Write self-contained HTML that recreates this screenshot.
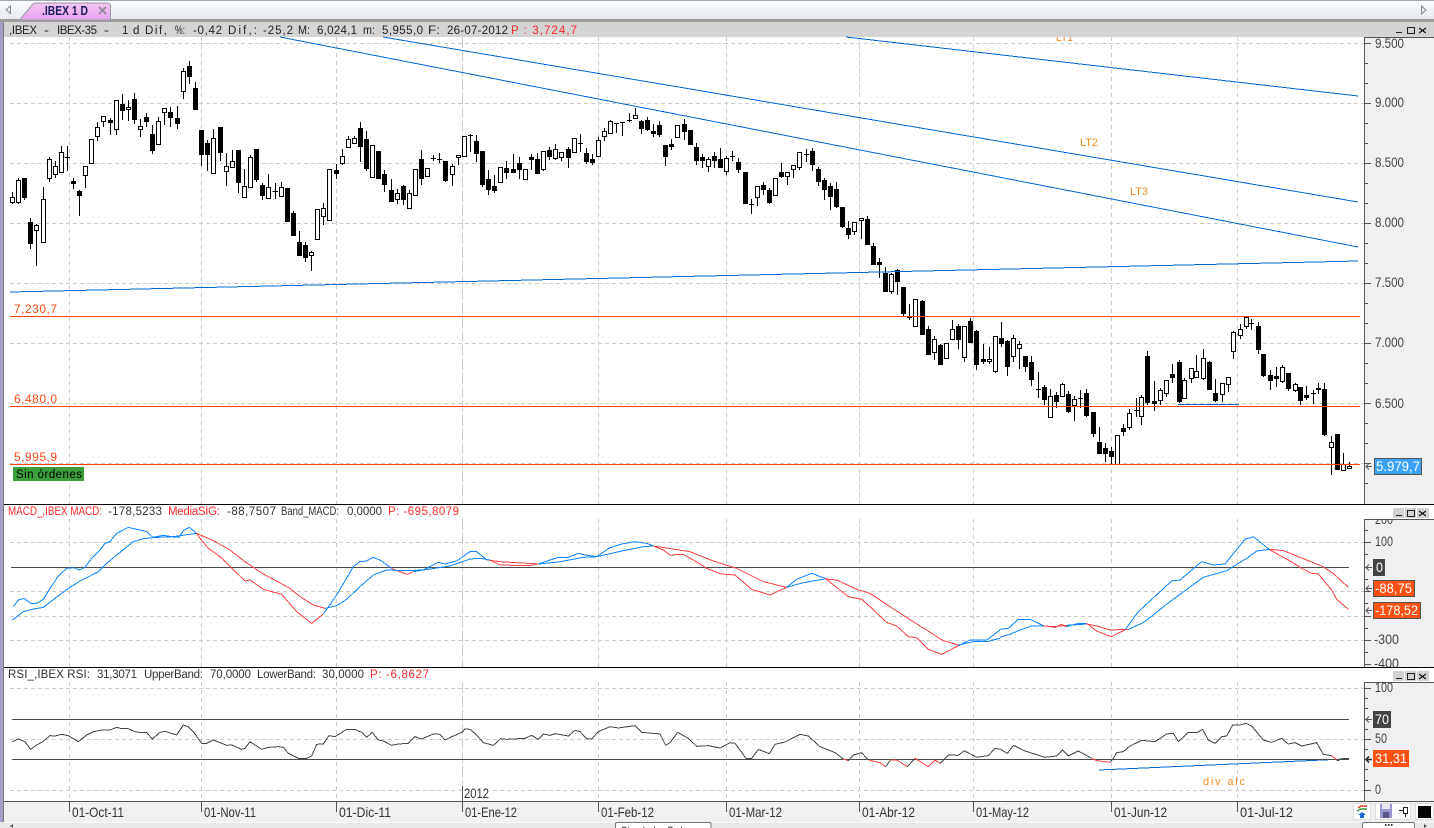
<!DOCTYPE html>
<html><head><meta charset="utf-8"><title>IBEX 1 D</title>
<style>
html,body{margin:0;padding:0;background:#fff}
body{width:1434px;height:828px;overflow:hidden}
svg{display:block;font-family:"Liberation Sans",sans-serif}
text{white-space:pre}
.g{stroke:#ccc;stroke-width:1;stroke-dasharray:4 3;fill:none}
.v{stroke:#ccc;stroke-width:1;stroke-dasharray:4 4;fill:none}
.c{shape-rendering:crispEdges}
.t{font-size:11.5px;fill:#333}
.k{font-size:11.5px;fill:#222}
.r{font-size:11.5px;fill:#ff2828}
.a{font-size:14px;fill:#444}
.d{font-size:14px;fill:#333}
.w{font-size:14px;fill:#fff}
.o{font-size:11px;fill:#f08a1c}
.l{font-size:12px;fill:#ff4a12}
</style></head>
<body>
<svg width="1434" height="828" viewBox="0 0 1434 828" xmlns="http://www.w3.org/2000/svg">
<defs>
<linearGradient id="top" x1="0" y1="0" x2="0" y2="1"><stop offset="0" stop-color="#fbfcfd"/><stop offset="1" stop-color="#e6eaee"/></linearGradient>
<linearGradient id="tab" x1="0" y1="0" x2="0" y2="1"><stop offset="0" stop-color="#f4c8f2"/><stop offset="1" stop-color="#e6a4f0"/></linearGradient>
</defs>
<rect width="1434" height="828" fill="#fff"/>
<!-- top tab bar -->
<rect x="0" y="0" width="1434" height="19" fill="url(#top)"/>
<rect x="0" y="0" width="1434" height="1" fill="#a0aab4"/>
<rect x="0" y="19" width="1434" height="3" fill="#9c9c9c"/>
<path d="M20 19.5L33 4Q34 3 36 3H107Q110 3 110.500 6V19.500" fill="url(#tab)" stroke="#9a9aa8"/>
<text x="42" y="15" font-size="13" font-weight="bold" fill="#1a1a60" textLength="46" lengthAdjust="spacingAndGlyphs">.IBEX 1 D</text>
<path d="M99 7L106 14M106 7L99 14" stroke="#8a8a92" stroke-width="1.600"/>
<path d="M10.500 6V13.500L6 9.700Z" fill="#eee" stroke="#888"/>
<path d="M1421.500 6V14L1426 10Z" fill="#eee" stroke="#888"/>
<!-- frame -->
<rect x="0" y="22" width="3" height="806" fill="#a89cc8"/>
<rect x="3" y="22" width="1" height="800" fill="#777"/>
<rect x="4" y="22" width="1430" height="15" fill="#d4d4d4"/>
<!-- right axis background -->
<rect x="1364" y="37" width="70" height="467" fill="#f0f0f0"/>
<rect x="1364" y="519" width="70" height="148" fill="#f0f0f0"/>
<rect x="1364" y="682" width="70" height="119" fill="#f0f0f0"/>
<rect x="4" y="801" width="1430" height="21" fill="#f0f0f0"/>
<rect x="0" y="822" width="1434" height="6" fill="#e8e8e8"/>
<rect x="3" y="822" width="1431" height="1" fill="#f8f8f8"/>

<!-- grid main -->
<g class="c">
<path class="g" d="M10 43.500H1364M10 103.500H1364M10 163.500H1364M10 223.500H1364M10 283.500H1364M10 343.500H1364M10 403.500H1364M10 463.500H1364"/>
<path class="v" d="M69.500 37V504M201.500 37V504M336.500 37V504M598.500 37V504M726.500 37V504M859.500 37V504M973.500 37V504M1111.500 37V504M1237.500 37V504"/>
<path d="M462.500 37V504" stroke="#ccc" stroke-dasharray="11 3"/>
<!-- grid macd -->
<path class="g" d="M10 542.500H1364M10 591.500H1364M10 616.500H1364M10 640.500H1364"/>
<path class="v" d="M69.500 519V667M201.500 519V667M336.500 519V667M598.500 519V667M726.500 519V667M859.500 519V667M973.500 519V667M1111.500 519V667M1237.500 519V667"/>
<path d="M462.500 519V667" stroke="#ccc" stroke-dasharray="11 3"/>
<!-- grid rsi -->
<path class="g" d="M10 688.500H1364M10 739.500H1364M10 790.500H1364"/>
<path class="v" d="M69.500 682V801M201.500 682V801M336.500 682V801M598.500 682V801M726.500 682V801M859.500 682V801M973.500 682V801M1111.500 682V801M1237.500 682V801"/>
<path d="M462.500 682V786" stroke="#ccc" stroke-dasharray="11 3"/>
</g>

<!-- candle wicks -->
<g class="c">
<path fill="none" stroke="#000" d="M12.500 192V204M18.500 178V204M24.500 178V200M30.500 218V249M36.500 224V266M43.500 187V242M49.500 157V182M55.500 161V178M61.500 146V172M67.500 146V171M64.500 157.500H70M73.500 178V189M79.500 190V216M85.500 166V188M91.500 139V163M97.500 122V141M103.500 116V127M110.500 118V135M116.500 100V135M122.500 94V120M128.500 100V121M134.500 93V124M140.500 119V137M146.500 113V127M152.500 125V154M158.500 117V144M164.500 112V125M170.500 107V127M177.500 106V129M183.500 68V99M189.500 61V84M195.500 82V109M201.500 130V166M207.500 140V171M213.500 129V174M220.500 127V161M226.500 153V186M232.500 150V167M238.500 150V193M244.500 169V198M250.500 155V188M256.500 149V182M262.500 183V200M268.500 174V198M275.500 183V199M272.500 191.500H278M281.500 182V197M287.500 188V221M293.500 211V236M299.500 231V255M305.500 242V262M311.500 251V271M317.500 209V239M323.500 203V225M329.500 169V221M336.500 164V179M342.500 149V165M348.500 136V147M354.500 136V143M360.500 122V162M366.500 131V171M372.500 145V177M378.500 151V178M384.500 170V192M391.500 179V201M397.500 189V204M403.500 185V205M409.500 190V208M415.500 169V195M421.500 150V185M427.500 168V176M433.500 155V161M431 158.500H436M439.500 153V163M437 159.500H442M445.500 161V182M452.500 164V186M458.500 155V165M464.500 136V156M470.500 134V152M468 135.500H473M476.500 135V162M482.500 151V187M488.500 170V195M494.500 175V193M500.500 167V182M506.500 161V179M513.500 154V173M519.500 157V179M525.500 169V180M531.500 154V170M537.500 153V174M543.500 151V171M549.500 147V160M555.500 144V160M561.500 152V161M568.500 147V168M574.500 138V152M580.500 134V152M578 143.500H583M586.500 148V164M592.500 154V165M598.500 137V156M604.500 128V141M610.500 120V134M616.500 123V133M614 123.500H619M622.500 122V136M620 122.500H625M629.500 113V122M627 120.500H632M635.500 108V119M641.500 120V134M647.500 117V131M653.500 124V137M659.500 121V137M665.500 145V166M671.500 139V150M677.500 125V137M684.500 119V140M690.500 130V145M696.500 143V165M702.500 154V168M708.500 157V172M714.500 152V168M720.500 148V168M726.500 156V175M732.500 151V161M730 156.500H735M738.500 158V173M745.500 172V203M751.500 199V214M749 204.500H754M757.500 186V206M763.500 182V195M769.500 188V204M775.500 178V196M781.500 163V178M787.500 172V185M793.500 165V178M799.500 152V170M806.500 149V162M804 154.500H809M812.500 148V171M818.500 167V186M824.500 178V200M830.500 183V210M836.500 182V208M842.500 207V228M848.500 221V239M854.500 222V235M861.500 218V239M867.500 216V244M873.500 243V265M879.500 258V278M885.500 267V291M891.500 273V294M897.500 269V295M903.500 287V316M909.500 304V320M907 317.500H912M915.500 299V327M922.500 300V334M928.500 326V354M934.500 336V360M940.500 344V364M946.500 343V358M952.500 320V339M958.500 324V349M964.500 326V362M970.500 318V343M976.500 330V370M983.500 344V364M989.500 347V364M995.500 336V373M1001.500 322V347M1007.500 340V376M1013.500 335V362M1019.500 341V369M1025.500 356V372M1031.500 356V386M1038.500 372V398M1036 389.500H1041M1044.500 385V405M1050.500 389V417M1056.500 392V408M1062.500 383V396M1068.500 391V413M1074.500 396V421M1080.500 390V408M1078 398.500H1083M1086.500 389V417M1093.500 412V437M1099.500 427V454M1105.500 443V462M1111.500 447V464M1117.500 435V464M1123.500 424V436M1129.500 409V430M1136.500 398V417M1134 410.500H1139M1141.500 395V425M1147.500 351V405M1154.500 381V411M1160.500 388V405M1166.500 380V397M1172.500 364V383M1179.500 360V403M1184.500 378V398M1191.500 368V383M1196.500 355V377M1203.500 349V380M1209.500 361V390M1215.500 379V402M1222.500 383V402M1228.500 377V392M1233.500 331V359M1240.500 324V339M1246.500 316V329M1251.500 319V330M1249 323.500H1254M1258.500 322V354M1263.500 354V377M1270.500 370V390M1276.500 367V387M1282.500 365V383M1288.500 373V391M1295.500 383V392M1300.500 387V405M1306.500 386V400M1313.500 390V404M1311 393.500H1316M1318.500 383V394M1324.500 383V436M1331.500 436V475M1337.500 434V470M1343.500 453V470M1349.500 462V469"/>
</g>

<!-- black bodies -->
<g class="c">
<path fill="#000" stroke="#000" d="M22.500 178.500h4v19h-4zM28.500 222.500h4v21h-4zM71.500 181.500h4v2h-4zM77.500 191.500h4v4h-4zM108.500 120.500h4v2h-4zM120.500 104.500h4v6h-4zM132.500 99.500h4v20h-4zM144.500 117.500h4v4h-4zM150.500 134.500h4v16h-4zM168.500 112.500h4v5h-4zM175.500 118.500h4v5h-4zM187.500 66.500h4v10h-4zM193.500 88.500h4v21h-4zM199.500 130.500h4v24h-4zM205.500 143.500h4v11h-4zM218.500 127.500h4v25h-4zM236.500 150.500h4v32h-4zM254.500 149.500h4v30h-4zM260.500 185.500h4v10h-4zM285.500 188.500h4v33h-4zM291.500 213.500h4v22h-4zM297.500 242.500h4v13h-4zM303.500 245.500h4v12h-4zM334.500 170.500h4v3h-4zM358.500 128.500h4v18h-4zM364.500 139.500h4v29h-4zM376.500 151.500h4v27h-4zM382.500 174.500h4v10h-4zM389.500 190.500h4v11h-4zM401.500 186.500h4v13h-4zM419.500 159.500h4v19h-4zM443.500 161.500h4v19h-4zM474.500 141.500h4v12h-4zM480.500 151.500h4v33h-4zM486.500 179.500h4v10h-4zM492.500 186.500h4v4h-4zM504.500 168.500h4v4h-4zM511.500 169.500h4v3h-4zM517.500 163.500h4v6h-4zM529.500 157.500h4v2h-4zM535.500 159.500h4v14h-4zM547.500 150.500h4v6h-4zM566.500 149.500h4v8h-4zM584.500 153.500h4v8h-4zM590.500 159.500h4v3h-4zM639.500 121.500h4v7h-4zM645.500 120.500h4v9h-4zM651.500 131.500h4v2h-4zM657.500 125.500h4v9h-4zM663.500 145.500h4v11h-4zM669.500 144.500h4v2h-4zM682.500 124.500h4v7h-4zM688.500 130.500h4v14h-4zM694.500 147.500h4v13h-4zM700.500 157.500h4v3h-4zM712.500 156.500h4v4h-4zM718.500 159.500h4v8h-4zM736.500 162.500h4v7h-4zM743.500 172.500h4v31h-4zM761.500 185.500h4v4h-4zM767.500 190.500h4v12h-4zM779.500 172.500h4v4h-4zM810.500 151.500h4v13h-4zM816.500 169.500h4v12h-4zM822.500 180.500h4v9h-4zM828.500 186.500h4v10h-4zM834.500 189.500h4v17h-4zM840.500 207.500h4v19h-4zM846.500 228.500h4v6h-4zM865.500 219.500h4v25h-4zM871.500 246.500h4v18h-4zM877.500 262.500h4v2h-4zM883.500 273.500h4v18h-4zM895.500 270.500h4v11h-4zM901.500 287.500h4v26h-4zM920.500 301.500h4v33h-4zM926.500 329.500h4v25h-4zM938.500 345.500h4v19h-4zM956.500 326.500h4v13h-4zM968.500 321.500h4v21h-4zM974.500 331.500h4v33h-4zM981.500 359.500h4v2h-4zM999.500 338.500h4v5h-4zM1005.500 341.500h4v25h-4zM1023.500 356.500h4v10h-4zM1029.500 362.500h4v17h-4zM1042.500 387.500h4v12h-4zM1054.500 395.500h4v6h-4zM1066.500 394.500h4v17h-4zM1084.500 393.500h4v22h-4zM1091.500 412.500h4v21h-4zM1097.500 442.500h4v11h-4zM1103.500 448.500h4v5h-4zM1109.500 451.500h4v5h-4zM1121.500 428.500h4v3h-4zM1145.500 356.500h4v46h-4zM1152.500 401.500h4v2h-4zM1170.500 374.500h4v3h-4zM1177.500 362.500h4v39h-4zM1207.500 362.500h4v27h-4zM1213.500 393.500h4v7h-4zM1256.500 326.500h4v23h-4zM1261.500 354.500h4v21h-4zM1268.500 375.500h4v5h-4zM1274.500 376.500h4v2h-4zM1286.500 373.500h4v15h-4zM1298.500 387.500h4v13h-4zM1304.500 395.500h4v2h-4zM1316.500 388.500h4v1h-4zM1322.500 389.500h4v45h-4zM1335.500 434.500h4v35h-4z"/>
<!-- white bodies -->
<path fill="#fff" stroke="#000" d="M10.500 197.500h4v5h-4zM16.500 180.500h4v22h-4zM34.500 225.500h4v5h-4zM41.500 199.500h4v43h-4zM47.500 159.500h4v19h-4zM53.500 166.500h4v8h-4zM59.500 152.500h4v20h-4zM83.500 166.500h4v9h-4zM89.500 139.500h4v24h-4zM95.500 127.500h4v9h-4zM101.500 116.500h4v5h-4zM114.500 100.500h4v29h-4zM126.500 107.500h4v2h-4zM138.500 126.500h4v3h-4zM156.500 121.500h4v23h-4zM162.500 108.500h4v4h-4zM181.500 71.500h4v20h-4zM211.500 138.500h4v35h-4zM224.500 166.500h4v5h-4zM230.500 161.500h4v6h-4zM242.500 186.500h4v11h-4zM248.500 157.500h4v30h-4zM266.500 187.500h4v11h-4zM279.500 187.500h4v9h-4zM309.500 252.500h4v3h-4zM315.500 209.500h4v30h-4zM321.500 208.500h4v8h-4zM327.500 169.500h4v51h-4zM340.500 156.500h4v7h-4zM346.500 139.500h4v8h-4zM352.500 138.500h4v5h-4zM370.500 145.500h4v32h-4zM395.500 193.500h4v6h-4zM407.500 193.500h4v15h-4zM413.500 169.500h4v26h-4zM425.500 168.500h4v8h-4zM450.500 166.500h4v8h-4zM456.500 155.500h4v2h-4zM462.500 136.500h4v20h-4zM498.500 167.500h4v15h-4zM523.500 169.500h4v10h-4zM541.500 151.500h4v18h-4zM553.500 149.500h4v9h-4zM559.500 152.500h4v5h-4zM572.500 138.500h4v14h-4zM596.500 140.500h4v16h-4zM602.500 131.500h4v5h-4zM608.500 121.500h4v12h-4zM633.500 115.500h4v3h-4zM675.500 125.500h4v12h-4zM706.500 159.500h4v7h-4zM724.500 158.500h4v13h-4zM755.500 186.500h4v11h-4zM773.500 178.500h4v17h-4zM785.500 172.500h4v4h-4zM791.500 165.500h4v4h-4zM797.500 152.500h4v15h-4zM852.500 222.500h4v9h-4zM859.500 218.500h4v2h-4zM889.500 274.500h4v17h-4zM913.500 299.500h4v27h-4zM932.500 339.500h4v13h-4zM944.500 343.500h4v15h-4zM950.500 329.500h4v10h-4zM962.500 326.500h4v31h-4zM987.500 359.500h4v2h-4zM993.500 336.500h4v35h-4zM1011.500 338.500h4v18h-4zM1017.500 344.500h4v4h-4zM1048.500 396.500h4v21h-4zM1060.500 384.500h4v12h-4zM1072.500 399.500h4v6h-4zM1115.500 435.500h4v29h-4zM1127.500 413.500h4v14h-4zM1139.500 397.500h4v19h-4zM1158.500 390.500h4v10h-4zM1164.500 380.500h4v13h-4zM1182.500 380.500h4v18h-4zM1189.500 368.500h4v10h-4zM1194.500 371.500h4v6h-4zM1201.500 358.500h4v20h-4zM1220.500 383.500h4v11h-4zM1226.500 377.500h4v7h-4zM1231.500 332.500h4v19h-4zM1238.500 329.500h4v6h-4zM1244.500 317.500h4v9h-4zM1280.500 367.500h4v14h-4zM1293.500 384.500h4v6h-4zM1329.500 442.500h4v5h-4zM1341.500 464.500h4v6h-4zM1347.500 466.500h4v2h-4z"/>
</g>

<!-- trend lines -->
<g class="c" fill="none" stroke="#0068d0">
<path d="M280 37L1358 247M383 37L1358 202M846 37L1358 96M10 292L1358 261M1178 404.500H1239"/>
<path d="M1099 770L1345 759"/>
</g>
<g class="c" fill="none" stroke="#ff4208">
<path d="M10 316.500H1360M10 406.500H1360M10 464.500H1360"/>
</g>
<g class="c" fill="none" stroke="#4a4a4a">
<path d="M11 567.500H1349M12 719.500H1349M12 759.500H1349"/>
</g>

<!-- macd lines -->
<g fill="none" stroke-width="3" stroke-linejoin="round" class="c">
<g transform="translate(0 500) scale(.33333)">
<path stroke="#0a84ff" d="M40 320L55 300 72 295 92 310 110 310 130 298 150 265 175 228 200 205 220 203 238 210 255 202 275 175 300 150 315 130 330 125 350 100 385 82 410 88 440 95 458 112 490 106 515 110 537 112 550 92 568 82 590 100"/>
<path stroke="#ff4040" d="M590 100L600 115 625 145 660 170 690 200 735 243 750 240 790 268 845 283 890 335 935 370 970 342"/>
<path stroke="#0a84ff" d="M970 342L1010 285 1060 200 1080 185 1100 183 1118 172 1140 180 1175 205"/>
<path stroke="#ff4040" d="M1175 205L1190 212 1222 223 1240 215"/>
<path stroke="#0a84ff" d="M1240 215L1270 210 1315 187 1335 192 1370 183 1410 155 1430 155 1440 163 1461 180"/>
<path stroke="#ff4040" d="M1461 180L1500 185"/>
<path stroke="#0a84ff" d="M37 360L70 335 100 327 130 322 165 295 205 265 240 243 270 228 295 215 320 190 350 165 400 125 430 116 470 112 520 110 590 100"/>
<path stroke="#ff4040" d="M590 100L640 122 690 150 735 185 790 222 870 265 900 290 940 315 975 325"/>
<path stroke="#0a84ff" d="M975 325L1010 317 1040 298 1080 260 1120 225 1160 210 1220 212 1270 210 1350 198 1410 177 1440 175 1470 180"/>
<path stroke="#ff4040" d="M1470 180L1500 195"/>
</g>
<g transform="translate(500 500) scale(.33333)">
<path stroke="#ff4040" d="M0 185L50 188 115 192M0 195L85 197 115 192"/>
<path stroke="#0a84ff" d="M115 192L150 180 175 172 205 172 235 160 255 165 290 170 330 143 365 132 405 125 440 130 460 138M115 192L175 186 250 172 290 170 370 152 430 140 460 138"/>
<path stroke="#ff4040" d="M460 138L490 150 510 165 550 163 580 180 620 205 665 222 705 225 755 268 810 285 860 262M460 138L570 155 640 183 710 205 790 245 860 262"/>
<path stroke="#0a84ff" d="M860 262L890 238 935 220 975 235M860 262L910 248 975 237"/>
<path stroke="#ff4040" d="M975 235L1010 262 1045 290 1085 298 1110 320 1160 367 1190 378 1225 410 1250 413 1285 448 1325 463 1375 437M975 237L1010 240 1070 268 1110 280 1170 320 1260 378 1330 422 1375 435"/>
<path stroke="#0a84ff" d="M1375 437L1410 420 1460 420 1500 390M1375 435L1420 425 1460 425 1500 415"/>
</g>
<g transform="translate(1000 500) scale(.33333)">
<path stroke="#0a84ff" d="M0 388L25 385 55 358 90 358 130 377M0 412L30 403 60 390 95 378 130 378"/>
<path stroke="#ff4040" d="M130 377L165 382 185 373 200 380M130 378L165 380 200 376"/>
<path stroke="#0a84ff" d="M200 380L235 370 260 370M200 376L260 372"/>
<path stroke="#ff4040" d="M260 370L290 393 333 410 375 390M260 372L290 378 330 390 385 388"/>
<path stroke="#0a84ff" d="M375 390L415 335 515 243 540 240 605 185 640 195 675 192 735 118 760 110 810 150M385 388L430 368 510 305 610 232 680 212 740 175 770 153 810 148"/>
<path stroke="#ff4040" d="M810 150L870 183 905 205 935 220 955 222 995 270 1010 298 1045 328M810 148L850 152 900 172 965 198 1000 220 1045 262"/>
</g>
<!-- rsi -->
<g transform="translate(0 670) scale(.33333)">
<path stroke="#444" d="M37 215L55 207 75 215 92 238 110 225 128 215 150 197 165 198 185 193 205 197 235 215 260 195 280 185 305 180 330 180 350 172 365 176 385 176 405 185 425 188 440 187 457 207 480 187 495 184 530 195 550 165 565 170 580 185 605 220 620 220 640 210 660 218 680 226 695 225 725 238 735 235 750 215 785 238 805 232 835 230 850 232 865 250 895 265 920 265 935 258 950 223 970 222 987 197 1005 200 1040 178 1065 178 1085 187 1100 202 1117 187 1135 210 1150 213 1175 226 1195 222 1225 220 1245 200 1265 207 1300 192 1320 193 1335 210 1360 198 1385 187 1395 177 1410 178 1430 195 1450 218 1480 226 1500 208"/>
</g>
<g transform="translate(500 500) scale(.33333)">
<path stroke="#444" d="M0 716L20 718 75 715 95 706 115 718 130 702 150 706 165 701 205 708 225 691 240 695 260 716 275 717 295 695 330 680 355 684 405 677 425 697 480 702 497 736 510 728 533 697 565 715 590 739 625 737 660 744 690 728 705 730 738 775 755 775 775 748 808 761 825 733 855 726 900 703 925 708 960 740 1005 758 1030 777"/>
<path stroke="#ff4040" d="M1030 777L1045 782"/>
<path stroke="#444" d="M1045 782L1060 765 1085 758 1105 780"/>
<path stroke="#ff4040" d="M1105 780L1140 788 1157 800"/>
<path stroke="#444" d="M1157 800L1172 780"/>
<path stroke="#ff4040" d="M1172 780L1190 780 1222 800"/>
<path stroke="#444" d="M1222 800L1245 775"/>
<path stroke="#ff4040" d="M1245 775L1285 800 1305 780 1320 790"/>
<path stroke="#444" d="M1320 790L1345 765 1375 766 1393 752 1430 772 1465 767 1485 745 1500 748"/>
</g>
<g transform="translate(1000 670) scale(.33333)">
<path stroke="#444" d="M0 237L22 250 40 226 75 243 135 262 170 258 187 240 205 258 235 243 275 265"/>
<path stroke="#ff4040" d="M275 265L290 272 330 277"/>
<path stroke="#444" d="M330 277L340 265 350 248 370 245 390 228 425 211 465 215 500 192 520 190 535 215 565 187 590 188 608 178 625 210 645 220 665 200 680 198 698 165 720 165 738 160 755 168 790 210 815 217 845 205 865 222 885 218 905 228 950 218 970 253 995 257"/>
<path stroke="#ff4040" d="M995 257L1010 270"/>
<path stroke="#444" d="M1010 270L1015 272 1025 266 1047 266"/>
</g>
</g>

<!-- pane separators -->
<rect x="4" y="504" width="1430" height="1" fill="#000"/>
<rect x="4" y="505" width="1430" height="14" fill="#fff"/>
<rect x="4" y="667" width="1430" height="1" fill="#000"/>
<rect x="4" y="668" width="1430" height="14" fill="#fff"/>
<rect x="4" y="801" width="1430" height="1" fill="#555"/>

<!-- axes -->
<g class="c" fill="none" stroke="#555">
<path d="M1364.500 37V504M1364 37.500H1434M1364.500 519V667M1364 519.500H1434M1364.500 682V801M1364 682.500H1434"/>
<path d="M1364 43.500h7M1364 103.500h7M1364 163.500h7M1364 223.500h7M1364 283.500h7M1364 343.500h7M1364 403.500h7M1364 463.500h7M1364 63.500h4M1364 83.500h4M1364 123.500h4M1364 143.500h4M1364 183.500h4M1364 203.500h4M1364 243.500h4M1364 263.500h4M1364 303.500h4M1364 323.500h4M1364 363.500h4M1364 383.500h4M1364 423.500h4M1364 443.500h4M1364 483.500h4"/>
<path d="M1364 542.500h7M1364 567.500h7M1364 591.500h7M1364 616.500h7M1364 640.500h7M1364 664.500h7M1364 530.500h4M1364 554.500h4M1364 579.500h4M1364 603.500h4M1364 628.500h4M1364 652.500h4"/>
<path d="M1364 688.500h7M1364 719.500h7M1364 739.500h7M1364 759.500h7M1364 790.500h7M1364 698.500h4M1364 708.500h4M1364 729.500h4M1364 749.500h4M1364 769.500h4M1364 780.500h4"/>
<path d="M69.500 802v10M201.500 802v10M336.500 802v10M462.500 786v26M598.500 802v10M726.500 802v10M859.500 802v10M973.500 802v10M1111.500 802v10M1237.500 802v10"/>
</g>

<!-- title texts -->
<text class="k" x="9" y="34" textLength="28" lengthAdjust="spacing">,IBEX</text>
<text class="k" x="44" y="34" textLength="5" lengthAdjust="spacingAndGlyphs">-</text>
<text class="k" x="57" y="34" textLength="40" lengthAdjust="spacing">IBEX-35</text>
<text class="k" x="104" y="34" textLength="5" lengthAdjust="spacingAndGlyphs">-</text>
<text class="k" x="122" y="34">1</text>
<text class="k" x="133" y="34">d</text>
<text class="k" x="145" y="34" textLength="22" lengthAdjust="spacing">Dif,</text>
<text class="k" x="175" y="34" textLength="10" lengthAdjust="spacingAndGlyphs">%:</text>
<text class="k" x="193" y="34" textLength="29" lengthAdjust="spacing">-0,42</text>
<text class="k" x="228" y="34" textLength="29" lengthAdjust="spacing">Dif,:</text>
<text class="k" x="263" y="34" textLength="30" lengthAdjust="spacing">-25,2</text>
<text class="k" x="298" y="34" textLength="12" lengthAdjust="spacingAndGlyphs">M:</text>
<text class="k" x="317" y="34" textLength="40" lengthAdjust="spacing">6,024,1</text>
<text class="k" x="363" y="34" textLength="12" lengthAdjust="spacingAndGlyphs">m:</text>
<text class="k" x="382" y="34" textLength="41" lengthAdjust="spacing">5,955,0</text>
<text class="k" x="428" y="34" textLength="12" lengthAdjust="spacingAndGlyphs">F:</text>
<text class="k" x="447" y="34" textLength="61" lengthAdjust="spacing">26-07-2012</text>
<text class="r" x="511" y="34" textLength="66" lengthAdjust="spacing">P : 3,724,7</text>
<text class="r" x="8" y="515" textLength="94" lengthAdjust="spacingAndGlyphs">MACD_,IBEX MACD:</text>
<text class="t" x="108" y="515" textLength="54" lengthAdjust="spacing">-178,5233</text>
<text class="r" x="168" y="515" textLength="52" lengthAdjust="spacing">MediaSIG:</text>
<text class="t" x="227" y="515" textLength="49" lengthAdjust="spacing">-88,7507</text>
<text class="t" x="281" y="515" textLength="58" lengthAdjust="spacingAndGlyphs">Band_MACD:</text>
<text class="t" x="347" y="515" textLength="35" lengthAdjust="spacing">0,0000</text>
<text class="r" x="388" y="515" textLength="71" lengthAdjust="spacing">P: -695,8079</text>
<text class="t" x="8" y="678" textLength="82" lengthAdjust="spacing">RSI_,IBEX RSI:</text>
<text class="t" x="97" y="678" textLength="40" lengthAdjust="spacing">31,3071</text>
<text class="t" x="144" y="678" textLength="59" lengthAdjust="spacing">UpperBand:</text>
<text class="t" x="210" y="678" textLength="41" lengthAdjust="spacing">70,0000</text>
<text class="t" x="257" y="678" textLength="59" lengthAdjust="spacing">LowerBand:</text>
<text class="t" x="322" y="678" textLength="42" lengthAdjust="spacing">30,0000</text>
<text class="r" x="370" y="678" textLength="59" lengthAdjust="spacing">P: -6,8627</text>

<!-- pane annotation labels -->
<svg x="1000" y="37" width="200" height="10"><text class="o" x="56" y="4" textLength="17" lengthAdjust="spacingAndGlyphs">LT1</text></svg>
<text class="o" x="1080" y="146" textLength="18" lengthAdjust="spacingAndGlyphs">LT2</text>
<text class="o" x="1130" y="195" textLength="18" lengthAdjust="spacingAndGlyphs">LT3</text>
<text class="l" x="14" y="313" textLength="43" lengthAdjust="spacing">7,230,7</text>
<text class="l" x="14" y="403" textLength="43" lengthAdjust="spacing">6,480,0</text>
<text class="l" x="14" y="461" textLength="43" lengthAdjust="spacing">5,995,9</text>
<rect x="13" y="467" width="71" height="14" fill="#3a9e3a"/>
<text x="16" y="478" font-size="11.500" fill="#000" textLength="66" lengthAdjust="spacing">Sin órdenes</text>
<text x="1203" y="785" font-size="11" fill="#f08a1c" textLength="42" lengthAdjust="spacing">div alc</text>

<!-- right axis labels -->
<g>
<svg x="1365" y="37" width="69" height="16"><text class="a" x="10" y="11" textLength="29" lengthAdjust="spacingAndGlyphs">9.500</text></svg>
<text class="a" x="1375" y="107" textLength="29" lengthAdjust="spacingAndGlyphs">9.000</text>
<text class="a" x="1375" y="167" textLength="29" lengthAdjust="spacingAndGlyphs">8.500</text>
<text class="a" x="1375" y="227" textLength="29" lengthAdjust="spacingAndGlyphs">8.000</text>
<text class="a" x="1375" y="287" textLength="29" lengthAdjust="spacingAndGlyphs">7.500</text>
<text class="a" x="1375" y="347" textLength="29" lengthAdjust="spacingAndGlyphs">7.000</text>
<text class="a" x="1375" y="408" textLength="29" lengthAdjust="spacingAndGlyphs">6.500</text>
<svg x="1365" y="519" width="69" height="8"><text class="a" x="10" y="5" textLength="18" lengthAdjust="spacingAndGlyphs">200</text></svg>
<text class="a" x="1375" y="546" textLength="18" lengthAdjust="spacingAndGlyphs">100</text>
<text class="a" x="1374" y="644" textLength="25" lengthAdjust="spacingAndGlyphs">-300</text>
<svg x="1365" y="650" width="69" height="17"><text class="a" x="9" y="18" textLength="25" lengthAdjust="spacingAndGlyphs">-400</text></svg>
<text class="a" x="1375" y="692" textLength="18" lengthAdjust="spacingAndGlyphs">100</text>
<text class="a" x="1375" y="743" textLength="12" lengthAdjust="spacingAndGlyphs">50</text>
<text class="a" x="1375" y="794" textLength="6" lengthAdjust="spacingAndGlyphs">0</text>
</g>

<!-- value boxes -->
<g class="c">
<rect x="1374.500" y="458.500" width="47" height="16" fill="#3aa2f8" stroke="#555"/>
<rect x="1373" y="559" width="12" height="17" fill="#444"/>
<rect x="1373.500" y="580.500" width="41" height="16" fill="#ff5212" stroke="#555"/>
<rect x="1373.500" y="602.500" width="47" height="16" fill="#ff5212" stroke="#555"/>
<rect x="1373" y="711" width="18" height="17" fill="#444"/>
<rect x="1373" y="750" width="36" height="17" fill="#ff5212"/>
</g>
<text class="w" x="1376" y="471" textLength="44" lengthAdjust="spacingAndGlyphs">5.979,7</text>
<text class="w" x="1376" y="572" textLength="7" lengthAdjust="spacingAndGlyphs">0</text>
<text class="w" x="1375" y="593" textLength="37" lengthAdjust="spacingAndGlyphs">-88,75</text>
<text class="w" x="1375" y="615" textLength="43" lengthAdjust="spacingAndGlyphs">-178,52</text>
<text class="w" x="1375" y="724" textLength="14" lengthAdjust="spacingAndGlyphs">70</text>
<text class="w" x="1375" y="763" textLength="32" lengthAdjust="spacingAndGlyphs">31,31</text>
<g fill="none" stroke="#555">
<path d="M1372 466.500H1366M1369 463.500L1366 466.500 1369 469.500M1372 567.500H1366M1369 564.500L1366 567.500 1369 570.500M1372 588.500H1366M1369 585.500L1366 588.500 1369 591.500M1372 610.500H1366M1369 607.500L1366 610.500 1369 613.500M1372 719.500H1366M1369 716.500L1366 719.500 1369 722.500"/>
<path d="M1372 759.500H1366M1369 756.500L1366 759.500 1369 762.500" stroke-width="1.600" stroke="#333"/>
</g>

<!-- date axis labels -->
<text class="d" x="72" y="817" textLength="52" lengthAdjust="spacingAndGlyphs">01-Oct-11</text>
<text class="d" x="204" y="817" textLength="52" lengthAdjust="spacingAndGlyphs">01-Nov-11</text>
<text class="d" x="339" y="817" textLength="52" lengthAdjust="spacingAndGlyphs">01-Dic-11</text>
<text class="d" x="465" y="817" textLength="52" lengthAdjust="spacingAndGlyphs">01-Ene-12</text>
<text class="d" x="601" y="817" textLength="53" lengthAdjust="spacingAndGlyphs">01-Feb-12</text>
<text class="d" x="729" y="817" textLength="53" lengthAdjust="spacingAndGlyphs">01-Mar-12</text>
<text class="d" x="862" y="817" textLength="53" lengthAdjust="spacingAndGlyphs">01-Abr-12</text>
<text class="d" x="976" y="817" textLength="53" lengthAdjust="spacingAndGlyphs">01-May-12</text>
<text class="d" x="1114" y="817" textLength="53" lengthAdjust="spacingAndGlyphs">01-Jun-12</text>
<text class="d" x="1240" y="817" textLength="53" lengthAdjust="spacingAndGlyphs">01-Jul-12</text>
<rect x="464" y="787" width="26" height="13" fill="#fff"/>
<text class="d" x="464" y="798" textLength="25" lengthAdjust="spacingAndGlyphs">2012</text>

<!-- window buttons -->
<g class="c">
<g><rect x="1393" y="25" width="11" height="10" fill="#d2d2d2"/><rect x="1405" y="25" width="11" height="10" fill="#d2d2d2"/><rect x="1417" y="25" width="12" height="10" fill="#d2d2d2"/><path d="M1396 32.500h6M1407.500 27.500h7v6h-7zM1419 28l7 5M1426 28l-7 5" fill="none" stroke="#222" stroke-width="1.200"/></g>
<rect x="1393" y="508" width="11" height="10" fill="#d2d2d2"/><rect x="1405" y="508" width="11" height="10" fill="#d2d2d2"/><rect x="1417" y="508" width="12" height="10" fill="#d2d2d2"/><path d="M1396 515.500h6M1407.500 510.500h7v6h-7zM1419 511l7 5M1426 511l-7 5" fill="none" stroke="#222" stroke-width="1.200"/>
<rect x="1393" y="671" width="11" height="10" fill="#d2d2d2"/><rect x="1405" y="671" width="11" height="10" fill="#d2d2d2"/><rect x="1417" y="671" width="12" height="10" fill="#d2d2d2"/><path d="M1396 678.500h6M1407.500 673.500h7v6h-7zM1419 674l7 5M1426 674l-7 5" fill="none" stroke="#222" stroke-width="1.200"/>
</g>

<!-- bottom right icons -->
<rect x="1353.500" y="803.500" width="17" height="16" fill="#fff" stroke="#ddd"/>
<path d="M1358 808l3-2h6" fill="none" stroke="#d0402a" stroke-width="1.500"/>
<path d="M1357 811l4-2h6" fill="none" stroke="#3a9a3a" stroke-width="1.500"/>
<path d="M1362 812l-4 3h2v3h4v-3h2z" fill="#1a6ad8"/>
<rect x="1375.500" y="803.500" width="35" height="16" fill="#fff" stroke="#ddd"/>
<rect x="1380" y="804" width="12" height="14" fill="#9a96d0"/>
<rect x="1382" y="804" width="8" height="5" fill="#e8e8f0"/>
<rect x="1383" y="812" width="6" height="6" fill="#55558a"/>
<path d="M1399 810.500h4M1403.500 807.500h4v6h-4zM1405.500 814v3" fill="none" stroke="#222"/>
<rect x="1415.500" y="803.500" width="18" height="16" fill="#fff" stroke="#ddd"/>
<rect x="1418" y="806" width="13" height="12" fill="#000"/>

<!-- bottom tabs -->
<path d="M615.500 828V824Q615.500 822.500 617 822.500H709.500Q711 822.500 711 824V828" fill="#fff" stroke="#777"/>
<text x="621" y="835" font-size="12" fill="#222" textLength="72" lengthAdjust="spacingAndGlyphs">Simulador Orden</text>
<path d="M1362.500 828V824Q1362.500 822.500 1364 822.500H1413Q1414.500 822.500 1414.500 824V828" fill="#fff" stroke="#777"/>
<path d="M1385 825h1.500M1388 825h1.500M1391 825h1.500" stroke="#333" stroke-width="2"/>
<path d="M1424 824v4l3-2z" fill="#555"/>
<path d="M13 824v4l-3-2z" fill="#555"/>
</svg>
</body></html>
